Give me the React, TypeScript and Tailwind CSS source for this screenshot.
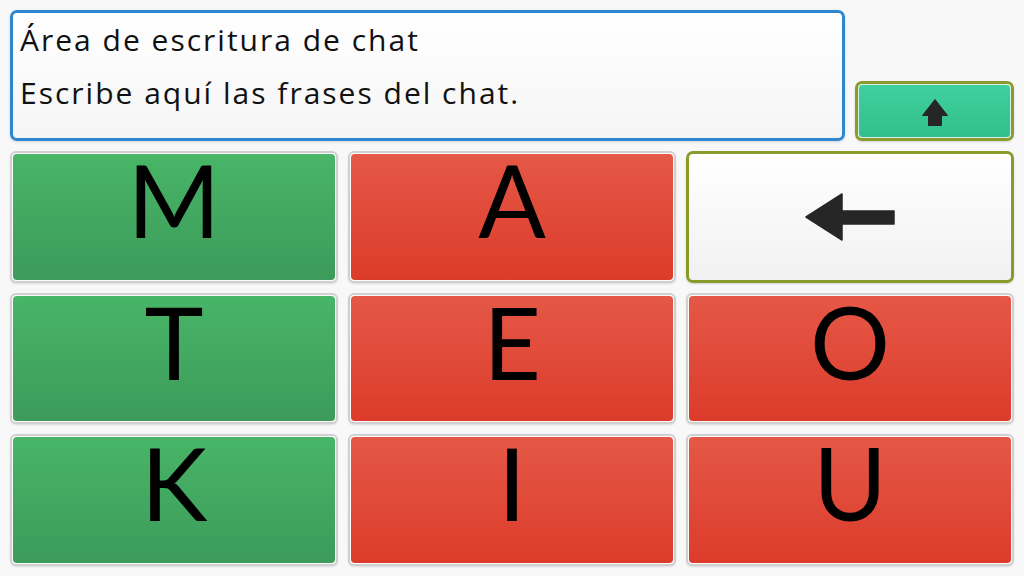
import React from "react";

const font = { fontFamily: "Lato, 'Noto Sans', sans-serif" };
const headFont = { fontFamily: "'Open Sans', 'Noto Sans', sans-serif" };

type Key = { label: string; color: "green" | "red" };

const keys: Key[] = [
  { label: "M", color: "green" },
  { label: "A", color: "red" },
  { label: "", color: "green" },
  { label: "T", color: "green" },
  { label: "E", color: "red" },
  { label: "O", color: "red" },
  { label: "K", color: "green" },
  { label: "I", color: "red" },
  { label: "U", color: "red" },
];

const LetterKey = ({ label, color }: Key) => (
  <div className="rounded-[6px] border-2 border-[#d0d0d0] bg-[#fbfbfb] p-px shadow-[0_1px_2px_rgba(0,0,0,0.12)]">
    <div
      className={
        color === "green"
          ? "flex h-full justify-center rounded-[4px] bg-gradient-to-b from-[#48b567] to-[#3c9b5a]"
          : "flex h-full justify-center rounded-[4px] bg-gradient-to-b from-[#e55746] to-[#dc3b2a]"
      }
    >
      <span className="text-[100px] leading-[90px] text-black" style={font}>
        {label}
      </span>
    </div>
  </div>
);

const BackKey = () => (
  <div className="flex items-center justify-center rounded-[7px] border-[3px] border-[#8a9b2c] bg-gradient-to-b from-white to-[#f1f1f1] shadow-[0_1px_2px_rgba(0,0,0,0.15)]">
    <svg width="90" height="48" viewBox="-1 -1 90 48">
      <polygon
        points="0,23 36,0 36,17 88,17 88,30 36,30 36,46"
        fill="#262626"
        stroke="#262626"
        strokeWidth="1.5"
        strokeLinejoin="round"
      />
    </svg>
  </div>
);

export default function App() {
  return (
    <div className="flex h-[576px] w-[1024px] flex-col gap-[10px] bg-[#f8f8f8] p-[10px]">
      <div className="flex h-[131px] gap-[10px]">
        <div className="flex-1 rounded-[7px] border-[3px] border-[#2f86d0] bg-gradient-to-b from-white to-[#f5f5f5] pl-[7px] shadow-[0_1px_3px_rgba(0,0,0,0.15)]">
          <div className="text-[30px] leading-[53px] tracking-[2px] text-[#111]" style={headFont}>
            <div>Área de escritura de chat</div>
            <div>Escribe aquí las frases del chat.</div>
          </div>
        </div>
        <div className="flex w-[159px] flex-col justify-end">
          <div className="h-[60px] rounded-[7px] border-[3px] border-[#8a9b2c] shadow-[0_1px_2px_rgba(0,0,0,0.15)]">
            <div className="flex h-full items-center justify-center rounded-[4px] border border-[#d8f0e4] bg-gradient-to-b from-[#40d09f] to-[#33be8d]">
              <svg width="26" height="27" viewBox="-0.5 -0.5 26 27" className="mt-[3px]">
                <polygon
                  points="12.5,0 25,16 19,16 19,26 6,26 6,16 0,16"
                  fill="#262626"
                  stroke="#262626"
                  strokeWidth="1"
                  strokeLinejoin="round"
                />
              </svg>
            </div>
          </div>
        </div>
      </div>
      <div className="grid flex-1 grid-cols-3 grid-rows-3 gap-[10px]">
        {keys.map((k, i) =>
          i === 2 ? <BackKey key={i} /> : <LetterKey key={i} {...k} />
        )}
      </div>
    </div>
  );
}
